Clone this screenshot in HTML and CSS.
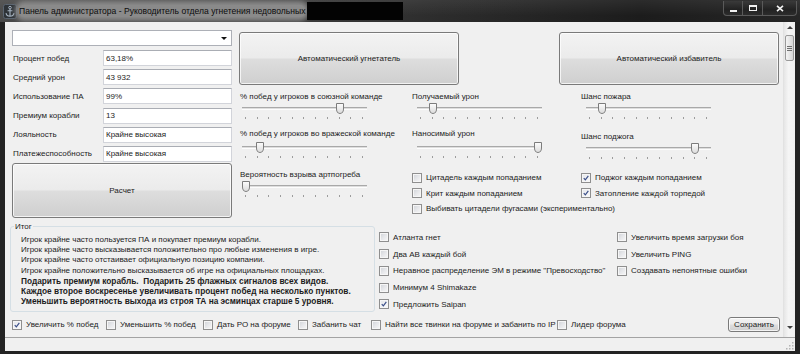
FILE: index.html
```html
<!DOCTYPE html>
<html lang="ru">
<head>
<meta charset="utf-8">
<title>Панель администратора</title>
<link rel="stylesheet" href="styles.css">
</head>
<body>
<div class="window">
  <div class="titlebar">
    <svg class="app-icon" viewBox="0 0 14 15" aria-hidden="true">
      <rect x="0.5" y="0.5" width="13" height="14" rx="2" fill="#2e3338" stroke="#5a6470"/>
      <circle cx="7" cy="3.6" r="1.3" fill="none" stroke="#a9b6c4" stroke-width="1"/>
      <path d="M7 5 V12.2 M4.6 6.8 H9.4 M3 9.2 Q3.6 12.3 7 12.3 Q10.4 12.3 11 9.2" fill="none" stroke="#a9b6c4" stroke-width="1.1"/>
    </svg>
    <span class="title">Панель администратора - Руководитель отдела угнетения недовольных</span>
    <span class="title-mask"></span>
    <div class="caption-buttons">
      <span class="cap cap-min"><span class="glyph-min"></span></span>
      <span class="cap cap-max"><span class="glyph-max"></span></span>
      <span class="cap cap-close">
        <svg width="8" height="7" viewBox="0 0 8 7" aria-hidden="true"><path d="M1 0.8 L7 6.2 M7 0.8 L1 6.2" stroke="#f2f2f2" stroke-width="1.6"/></svg>
      </span>
    </div>
  </div>

  <div class="frame">
    <div class="client">
      <div class="panel">
        <div class="content">
          <div class="top">
            <div class="stats">
              <div class="combo"><span class="combo-arrow"></span></div>
              <div class="fields">
                <span class="field-label">Процент побед</span><span class="textbox">63,18%</span>
                <span class="field-label">Средний урон</span><span class="textbox">43 932</span>
                <span class="field-label">Использование ПА</span><span class="textbox">99%</span>
                <span class="field-label">Премиум корабли</span><span class="textbox">13</span>
                <span class="field-label">Лояльность</span><span class="textbox">Крайне высокая</span>
                <span class="field-label">Платежеспособность</span><span class="textbox">Крайне высокая</span>
              </div>
              <button class="btn btn-calc">Расчет</button>
            </div>

            <div class="tools">
              <div class="big-buttons">
                <button class="btn btn-big">Автоматический угнетатель</button>
                <button class="btn btn-big">Автоматический избавитель</button>
              </div>
              <div class="sliders">
                <div class="scol scol-1">
                  <div class="tb-label">% побед у игроков в союзной команде</div>
                  <div class="tb"><div class="rail"><span class="lane"><span class="thumb" style="left:80%"></span></span></div><div class="ticks"></div></div>
                  <div class="tb-label l2">% побед у игроков во вражеской команде</div>
                  <div class="tb t2"><div class="rail"><span class="lane"><span class="thumb" style="left:12%"></span></span></div><div class="ticks"></div></div>
                  <div class="tb-label l3">Вероятность взрыва артпогреба</div>
                  <div class="tb t3"><div class="rail"><span class="lane"><span class="thumb" style="left:0%"></span></span></div><div class="ticks"></div></div>
                </div>
                <div class="scol scol-2">
                  <div class="tb-label">Получаемый урон</div>
                  <div class="tb"><div class="rail"><span class="lane"><span class="thumb" style="left:10%"></span></span></div><div class="ticks"></div></div>
                  <div class="tb-label l2">Наносимый урон</div>
                  <div class="tb t2"><div class="rail"><span class="lane"><span class="thumb" style="left:100%"></span></span></div><div class="ticks"></div></div>
                  <div class="cb-list">
                    <div class="cb"><span class="box"></span>Цитадель каждым попаданием</div>
                    <div class="cb"><span class="box"></span>Крит каждым попаданием</div>
                    <div class="cb"><span class="box"></span>Выбивать цитадели фугасами (экспериментально)</div>
                  </div>
                </div>
                <div class="scol scol-3">
                  <div class="tb-label">Шанс пожара</div>
                  <div class="tb"><div class="rail"><span class="lane"><span class="thumb" style="left:10%"></span></span></div><div class="ticks"></div></div>
                  <div class="tb-label l2b">Шанс поджога</div>
                  <div class="tb t2b"><div class="rail"><span class="lane"><span class="thumb" style="left:90%"></span></span></div><div class="ticks"></div></div>
                  <div class="cb-list">
                    <div class="cb"><span class="box checked"><svg viewBox="0 0 10 10" aria-hidden="true"><path d="M2.2 5.1 L4.2 7.3 L7.9 2.4" fill="none" stroke="#3a4e88" stroke-width="1.5"/></svg></span>Поджог каждым попаданием</div>
                    <div class="cb"><span class="box checked"><svg viewBox="0 0 10 10" aria-hidden="true"><path d="M2.2 5.1 L4.2 7.3 L7.9 2.4" fill="none" stroke="#3a4e88" stroke-width="1.5"/></svg></span>Затопление каждой торпедой</div>
                  </div>
                </div>
              </div>
            </div>
          </div>

          <div class="middle">
            <fieldset class="group">
              <legend>Итог</legend>
              <p>Игрок крайне часто пользуется ПА и покупает премиум корабли.</p>
              <p>Игрок крайне часто высказывается положительно про любые изменения в игре.</p>
              <p>Игрок крайне часто отстаивает официальную позицию компании.</p>
              <p>Игрок крайне положительно высказывается об игре на официальных площадках.</p>
              <p class="strong">Подарить премиум корабль.&nbsp; Подарить 25 флажных сигналов всех видов.</p>
              <p class="strong">Каждое второе воскресенье увеличивать процент побед на несколько пунктов.</p>
              <p class="strong">Уменьшить вероятность выхода из строя ТА на эсминцах старше 5 уровня.</p>
            </fieldset>
            <div class="opt-col opt-mid">
              <div class="cb"><span class="box"></span>Атланта гнет</div>
              <div class="cb"><span class="box"></span>Два АВ каждый бой</div>
              <div class="cb"><span class="box"></span>Неравное распределение ЭМ в режиме "Превосходство"</div>
              <div class="cb"><span class="box"></span>Минимум 4 Shimakaze</div>
              <div class="cb"><span class="box checked"><svg viewBox="0 0 10 10" aria-hidden="true"><path d="M2.2 5.1 L4.2 7.3 L7.9 2.4" fill="none" stroke="#3a4e88" stroke-width="1.5"/></svg></span>Предложить Saipan</div>
            </div>
            <div class="opt-col opt-right">
              <div class="cb"><span class="box"></span>Увеличить время загрузки боя</div>
              <div class="cb"><span class="box"></span>Увеличить PING</div>
              <div class="cb"><span class="box"></span>Создавать непонятные ошибки</div>
            </div>
          </div>

          <div class="bottom-row">
            <div class="cb"><span class="box checked"><svg viewBox="0 0 10 10" aria-hidden="true"><path d="M2.2 5.1 L4.2 7.3 L7.9 2.4" fill="none" stroke="#3a4e88" stroke-width="1.5"/></svg></span>Увеличить % побед</div>
            <div class="cb"><span class="box"></span>Уменьшить % побед</div>
            <div class="cb"><span class="box"></span>Дать РО на форуме</div>
            <div class="cb"><span class="box"></span>Забанить чат</div>
            <div class="cb"><span class="box"></span>Найти все твинки на форуме и забанить по IP</div>
            <div class="cb"><span class="box"></span>Лидер форума</div>
            <button class="btn btn-save">Сохранить</button>
          </div>
        </div>

        <div class="vscroll">
          <span class="arrow arrow-up"></span>
          <div class="sb-track">
            <div class="sb-thumb"><span class="grip-lines"></span></div>
          </div>
          <span class="arrow arrow-down"></span>
        </div>
      </div>
      <div class="status">
        <svg class="size-grip" width="10" height="10" viewBox="0 0 10 10" aria-hidden="true">
          <g fill="#b4b4b4">
            <rect x="8" y="2" width="1.5" height="1.5"/>
            <rect x="5" y="5" width="1.5" height="1.5"/><rect x="8" y="5" width="1.5" height="1.5"/>
            <rect x="2" y="8" width="1.5" height="1.5"/><rect x="5" y="8" width="1.5" height="1.5"/><rect x="8" y="8" width="1.5" height="1.5"/>
          </g>
        </svg>
      </div>
    </div>
  </div>
</div>
</body>
</html>
```

FILE: styles.css
```css
* { box-sizing: border-box; }
html, body { margin: 0; padding: 0; }
body {
  width: 800px;
  height: 354px;
  overflow: hidden;
  background: #111;
  font-family: "Liberation Sans", Arial, sans-serif;
  font-size: 8px;
  color: #1c1c1c;
}

.window {
  width: 800px;
  height: 354px;
  display: flex;
  flex-direction: column;
  background: #232323;
}

/* ---------- title bar ---------- */
.titlebar {
  height: 22px;
  flex: none;
  display: flex;
  align-items: center;
  background:
    linear-gradient(to bottom, rgba(255,255,255,0.07), rgba(255,255,255,0) 70%),
    linear-gradient(to right, #4a4a4a 0%, #404040 30%, #2c2c2c 55%, #1c1c1c 80%, #262626 100%);
}
.app-icon { width: 14px; height: 15px; margin-left: 3px; flex: none; }
.title {
  margin-left: 2px;
  font-size: 8.55px;
  color: #0c0c0c;
  white-space: nowrap;
  line-height: 12px;
  background: #8a8a8a;
  box-shadow: 0 0 5px 4px #8a8a8a;
  border-radius: 5px;
}
.title-mask {
  width: 96px;
  height: 18px;
  margin-left: 2px;
  background: #030303;
  flex: none;
}
.caption-buttons {
  margin-left: auto;
  margin-right: 3px;
  align-self: flex-start;
  margin-top: 1px;
  display: flex;
  height: 15px;
  border: 1px solid #5a5a5a;
  border-top: none;
  border-radius: 0 0 4px 4px;
  background: linear-gradient(to bottom, #3a3a3a, #222 60%, #2c2c2c);
  overflow: hidden;
}
.cap {
  display: flex;
  align-items: center;
  justify-content: center;
  height: 100%;
  border-right: 1px solid #5a5a5a;
}
.cap:last-child { border-right: none; }
.cap-min { width: 19px; }
.cap-max { width: 20px; }
.cap-close { width: 33px; }
.glyph-min { width: 7px; height: 2px; background: #f0f0f0; margin-top: 6px; }
.glyph-max { width: 8px; height: 6px; border: 1px solid #f0f0f0; border-top-width: 2px; }

/* ---------- frame / client ---------- */
.frame {
  flex: 1;
  display: flex;
  padding: 0 5px 3px 5px;
}
.client {
  flex: 1;
  display: flex;
  flex-direction: column;
  background: #f0f0f0;
}
.panel {
  height: 315px;
  display: flex;
}
.content {
  flex: 1;
  padding-top: 8px;
}
.status {
  height: 14px;
  border-top: 1px solid #a3a3a3;
  display: flex;
  justify-content: flex-end;
  align-items: flex-end;
  padding: 0 1px 1px 0;
}
.size-grip { display: block; }

/* ---------- scroll bar ---------- */
.vscroll {
  width: 12px;
  display: flex;
  flex-direction: column;
  align-items: center;
  background: linear-gradient(to right, #e6e6e6, #f5f5f5 40%, #f0f0f0);
  border-left: 1px solid #e2e2e2;
}
.arrow {
  width: 0; height: 0;
  border-left: 3px solid transparent;
  border-right: 3px solid transparent;
  flex: none;
}
.arrow-up { border-bottom: 3px solid #404040; margin-top: 4px; }
.arrow-down { border-top: 3px solid #404040; margin-bottom: 8px; }
.sb-track { flex: 1; width: 100%; padding: 6px 1px 0 1px; }
.sb-thumb {
  height: 26px;
  border: 1px solid #9a9a9a;
  border-radius: 2px;
  background: linear-gradient(to right, #f4f4f4, #e4e4e4 55%, #d6d6d6);
  display: flex;
  align-items: center;
  justify-content: center;
}
.grip-lines {
  width: 5px;
  height: 5px;
  background: repeating-linear-gradient(to bottom, #6f6f6f 0 1px, transparent 1px 2px);
}

/* ---------- common controls ---------- */
.btn {
  font: inherit;
  color: #1c1c1c;
  border: 1px solid #7a7a7a;
  border-radius: 3px;
  padding: 0;
  background: linear-gradient(to bottom, #f3f3f3 0%, #ebebeb 48%, #dddddd 52%, #cfcfcf 100%);
  box-shadow: inset 0 0 0 1px rgba(255,255,255,0.75);
}
.cb {
  display: flex;
  align-items: center;
  gap: 4px;
  white-space: nowrap;
}
.box {
  width: 10px;
  height: 10px;
  flex: none;
  border: 1px solid #8f8f8f;
  background: linear-gradient(135deg, #cfd2d7 0%, #e6e7ea 50%, #f8f8f8 100%);
  box-shadow: inset 0 0 0 1px #f6f6f6;
  display: flex;
}
.box svg { width: 8px; height: 8px; }
.box.checked { background: linear-gradient(135deg, #e4e6ea, #fbfbfb); }

/* ---------- top section ---------- */
.top {
  display: flex;
  gap: 7px;
  padding-left: 7px;
}
.stats { width: 220px; flex: none; display: flex; flex-direction: column; }
.combo {
  height: 16px;
  background: #fff;
  border: 1px solid #adb0b7;
  position: relative;
}
.combo-arrow {
  position: absolute;
  right: 4px;
  top: 6px;
  border-left: 3px solid transparent;
  border-right: 3px solid transparent;
  border-top: 3px solid #111;
}
.fields {
  display: grid;
  grid-template-columns: 91px 129px;
  grid-auto-rows: 16px;
  row-gap: 3.2px;
  margin-top: 4px;
}
.field-label {
  display: flex;
  align-items: center;
  padding-left: 1px;
  white-space: nowrap;
}
.textbox {
  display: flex;
  align-items: center;
  padding-left: 2px;
  background: #fff;
  border: 1px solid #d2d4da;
  border-top-color: #aaadb4;
  white-space: nowrap;
}
.btn-calc { height: 55px; margin-top: 1px; width: 220px; }

.tools {
  flex: 1;
  padding: 2px 4px 0 0;
  display: flex;
  flex-direction: column;
}
.big-buttons {
  display: flex;
  justify-content: space-between;
}
.btn-big { width: 220px; height: 53px; }

.sliders {
  display: grid;
  grid-template-columns: 172px 169px 1fr;
  margin-top: 6px;
  padding-left: 1px;
}
.tb-label { height: 11px; line-height: 11px; white-space: nowrap; }
.tb { height: 20px; margin-top: 4px; padding-left: 2px; }
.scol-2 .tb, .scol-3 .tb { padding-left: 5px; }
.rail {
  position: relative;
  width: 125px;
  height: 3px;
  margin-top: 5px;
  border-top: 1px solid #a9a9a9;
  border-bottom: 1px solid #fdfdfd;
  background: #dedede;
}
.lane {
  position: absolute;
  left: 0;
  top: 0;
  width: 117px;
  height: 0;
}
.thumb {
  position: absolute;
  top: -5px;
  width: 8px;
  height: 11px;
  border: 1px solid #7c7c7c;
  border-radius: 1px 1px 4px 4px / 1px 1px 5px 5px;
  background: linear-gradient(to bottom, #fbfbfb, #dcdcdc);
}
.ticks {
  width: 119px;
  height: 2px;
  margin: 7px 0 0 3px;
  background: repeating-linear-gradient(to right, #9c9c9c 0 1px, transparent 1px 11.7px);
}
.l2 { margin-top: 1px; }
.t2 { margin-top: 7px; }
.l3 { margin-top: 3px; }
.t3 { margin-top: 3px; }
.l2b { margin-top: 4px; }
.t2b { margin-top: 4px; }
.cb-list { margin-top: 4px; }
.cb-list .cb { height: 15.5px; }
.scol-3 .cb-list { margin-top: 3px; }

/* ---------- middle section ---------- */
.middle {
  display: flex;
  margin-top: 4px;
  padding-left: 5px;
}
.group {
  width: 365px;
  height: 90px;
  margin: 0;
  padding: 3px 0 0 10px;
  border: 1px solid #d5dfe5;
  border-radius: 3px;
  flex: none;
}
.group legend {
  font-size: 8px;
  line-height: 10px;
  padding: 0 1px;
  margin-left: -7px;
}
.group p {
  margin: 0;
  line-height: 10.2px;
  white-space: nowrap;
}
.group p.strong { font-weight: bold; font-size: 8.3px; }
.opt-col { display: flex; flex-direction: column; padding-top: 7px; }
.opt-col .cb { height: 16.75px; }
.opt-mid { width: 238px; margin-left: 4px; }

/* ---------- bottom row ---------- */
.bottom-row {
  display: grid;
  grid-template-columns: 94px 97px 95px 73px 186px 1fr auto;
  align-items: center;
  height: 16px;
  margin-top: 4px;
  padding-left: 7px;
}
.btn-save { width: 52px; height: 15px; margin-right: 3px; }
```
